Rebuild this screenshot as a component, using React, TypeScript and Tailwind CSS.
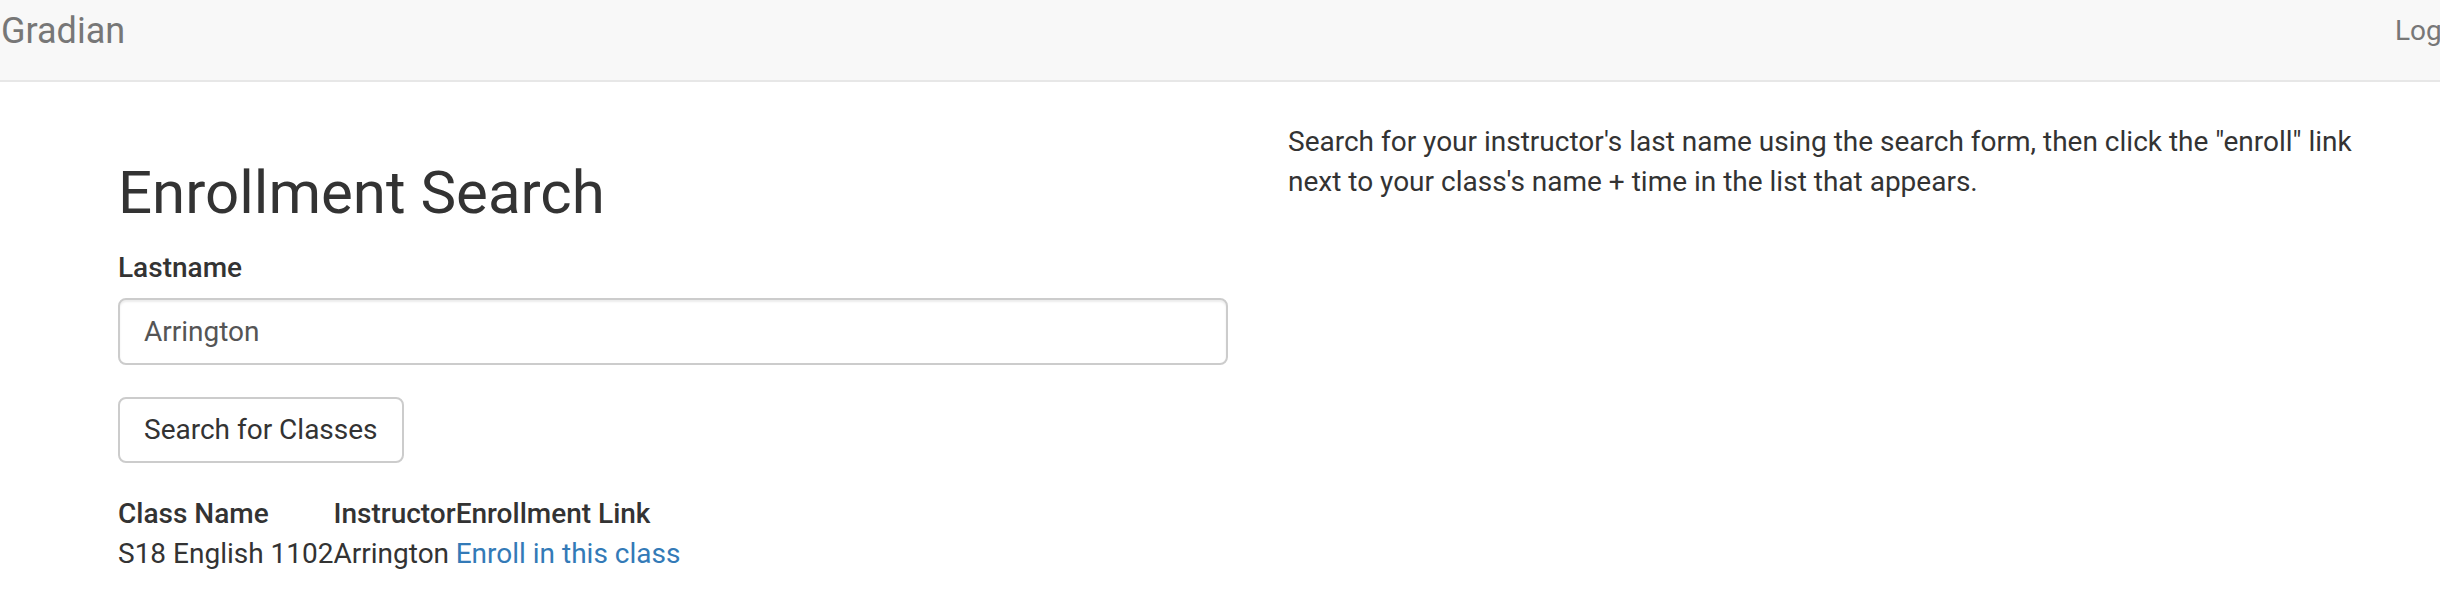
import React from 'react';

export default function App() {
  return (
    <div className="min-h-screen bg-white font-[Roboto,'Liberation_Sans',sans-serif] text-[28px] leading-[40px] text-[#333]">
      {/* Navbar: the page is wider than the shot, so Login is cut at the right edge */}
      <nav className="h-[82px] overflow-hidden border-b-2 border-[#e7e7e7] bg-[#f8f8f8]">
        <div className="flex w-[2464px] items-start justify-between pt-[11px]">
          <a className="pl-[1px] text-[36px] leading-[40px] text-[#777]">Gradian</a>
          <a className="whitespace-nowrap text-[28px] leading-[40px] text-[#777]">Login</a>
        </div>
      </nav>

      <div className="flex pl-[88px] pt-[40px]">
        {/* Left column */}
        <div className="w-[1170px] shrink-0 px-[30px]">
          <h1 className="mt-[38px] mb-[22px] text-[60px] leading-[66px] font-normal">Enrollment Search</h1>

          <form onSubmit={e => e.preventDefault()}>
            <div className="mb-[32px]">
              <label className="mb-[10px] block font-medium">Lastname</label>
              <input
                readOnly
                value="Arrington"
                className="block h-[67px] w-full rounded-[8px] border-2 border-[#ccc] bg-white px-[24px] text-[28px] text-[#555] shadow-[inset_0_2px_2px_rgba(0,0,0,0.075)] outline-none"
              />
            </div>
            <button
              type="submit"
              className="h-[66px] rounded-[8px] border-2 border-[#ccc] bg-white px-[24px] text-[28px] leading-[40px] text-[#333]"
            >
              Search for Classes
            </button>
          </form>

          <table className="mt-[31px]">
            <thead>
              <tr>
                <th className="p-0 text-left font-medium">Class Name</th>
                <th className="p-0 text-left font-medium">Instructor</th>
                <th className="p-0 text-left font-medium">Enrollment Link</th>
              </tr>
            </thead>
            <tbody>
              <tr>
                <td className="p-0">S18 English 1102</td>
                <td className="p-0">Arrington</td>
                <td className="p-0">
                  <a href="#" className="text-[#337ab7]">Enroll in this class</a>
                </td>
              </tr>
            </tbody>
          </table>
        </div>

        {/* Right column */}
        <div className="w-[1170px] shrink-0 px-[30px]">
          <p>
            Search for your instructor's last name using the search form, then click the "enroll" link next to your
            class's name + time in the list that appears.
          </p>
        </div>
      </div>
    </div>
  );
}
